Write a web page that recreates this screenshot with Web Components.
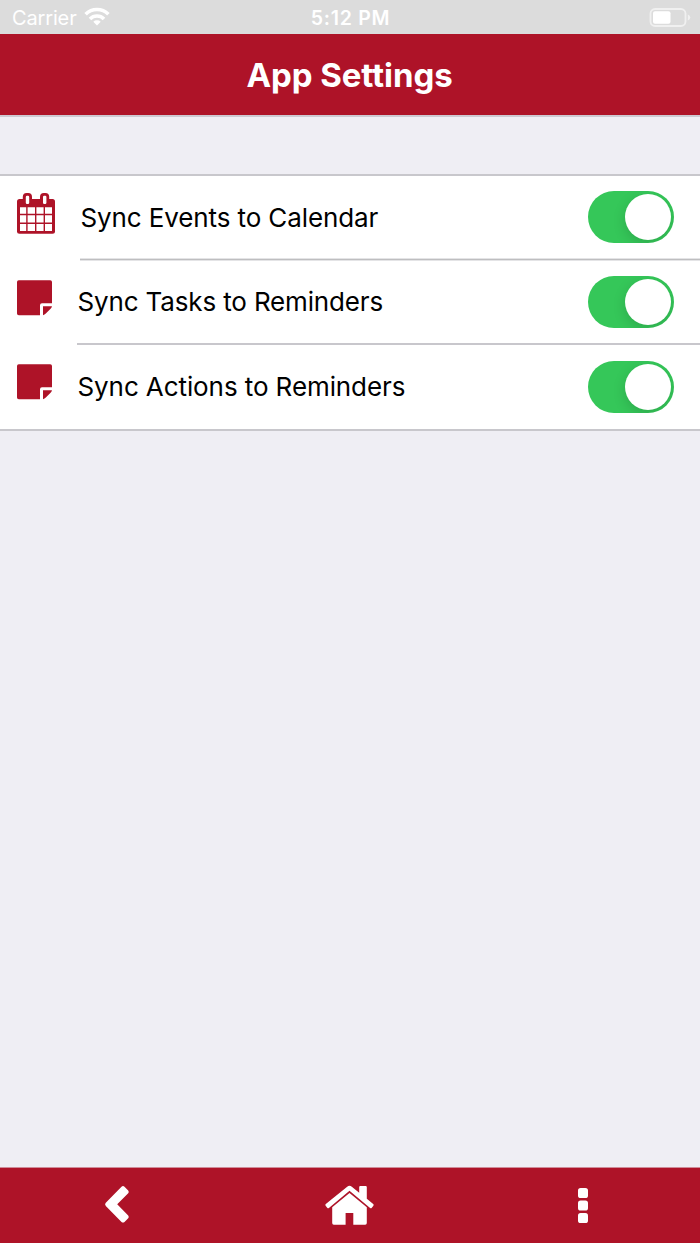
<!DOCTYPE html>
<html lang="en">
<head>
<meta charset="utf-8">
<title>App Settings</title>
<style>
    html, body {
        margin: 0;
        height: 100%;
    }
    body {
        font-family: Inter, "Liberation Sans", sans-serif;
        background: #fff;
        --brand: #ae1328;
        --line: #c8c7cc;
        --page: #efeef4;
    }
</style>
</head>
<body>
<settings-app>
    <status-bar slot="top" carrier="Carrier" time="5:12 PM"></status-bar>
    <title-bar slot="top">App Settings</title-bar>
    <settings-list>
        <settings-row class="first" icon="calendar" style="--inset: 80px; --spacing: -0.11px">Sync Events to Calendar</settings-row>
        <settings-row icon="note" style="--spacing: -0.15px">Sync Tasks to Reminders</settings-row>
        <settings-row class="last" icon="note" style="--spacing: -0.09px">Sync Actions to Reminders</settings-row>
    </settings-list>
    <tool-bar slot="bottom"></tool-bar>
</settings-app>
<script>
function mkTmplt(innerHtml) {
    var tmplt = document.createElement("template");
    tmplt.innerHTML = innerHtml;
    return tmplt;
}
class BaseElement extends HTMLElement {
    constructor() {
        super();
        const shadow = this.attachShadow({ mode: "open" });
        shadow.append(this.constructor._tmplt.content.cloneNode(true));
    }
}

class SettingsApp extends BaseElement {}
SettingsApp._tmplt = mkTmplt(`
        <slot name="top"></slot>
        <main><slot></slot></main>
        <slot name="bottom"></slot>
        <style>
            :host {
                display: flex;
                flex-direction: column;
                height: 1243px;
                background: var(--page);
            }
            main {
                flex: 1;
                padding-top: 57px;
            }
        </style>
    `);

class StatusBar extends BaseElement {
    connectedCallback() {
        this.shadowRoot.querySelector("#carrier").textContent = this.getAttribute("carrier");
        this.shadowRoot.querySelector("#time").textContent = this.getAttribute("time");
    }
}
StatusBar._tmplt = mkTmplt(`
        <div class="left">
            <span id="carrier"></span>
            <svg width="26" height="19" viewBox="0 0 26 19">
                <path d="M13 18.6 L9.3 14.8 A5.4 5.4 0 0 1 16.7 14.8 Z" fill="#fff"/>
                <path d="M6 11.9 A9.9 9.9 0 0 1 20 11.9" fill="none" stroke="#fff" stroke-width="3.6"/>
                <path d="M1.6 7.2 A16.2 16.2 0 0 1 24.4 7.2" fill="none" stroke="#fff" stroke-width="3.6"/>
            </svg>
        </div>
        <span id="time"></span>
        <svg class="battery" width="42" height="20" viewBox="0 0 42 20">
            <rect x="1.5" y="2" width="35" height="17" rx="4.5" fill="none" stroke="#f0f0f0" stroke-width="1.8"/>
            <rect x="4" y="4.3" width="17.5" height="12.4" rx="2" fill="#fff"/>
            <path d="M38.8 7.5 Q41.3 8.5 41.3 10.5 T38.8 13.5 Z" fill="#f0f0f0"/>
        </svg>
        <style>
            :host {
                display: grid;
                grid-template-columns: 1fr auto 1fr;
                align-items: center;
                box-sizing: border-box;
                height: 34px;
                padding: 0 9px 2px 12px;
                background: #dcdcdc;
                color: #fff;
                font-size: 20px;
                line-height: 32px;
            }
            .left {
                display: flex;
                align-items: center;
                gap: 7px;
            }
            .left svg {
                padding-bottom: 2px;
            }
            #carrier {
                letter-spacing: -0.15px;
                padding-top: 2px;
            }
            #time {
                font-weight: 600;
                font-size: 19.5px;
                letter-spacing: 0.75px;
                padding: 2px 2px 0 0;
            }
            .battery {
                justify-self: end;
            }
        </style>
    `);

class TitleBar extends BaseElement {}
TitleBar._tmplt = mkTmplt(`
        <slot></slot>
        <style>
            :host {
                display: flex;
                justify-content: center;
                align-items: center;
                box-sizing: border-box;
                height: 83px;
                padding-right: 1px;
                border-bottom: 2px solid #cdc9d2;
                background: var(--brand);
                color: #fff;
                font-size: 33px;
                font-weight: 700;
                letter-spacing: -0.08px;
            }
        </style>
    `);

class SettingsList extends BaseElement {}
SettingsList._tmplt = mkTmplt(`
        <slot></slot>
        <style>
            :host {
                display: block;
                background: #fff;
                border-top: 2px solid var(--line);
                border-bottom: 2px solid var(--line);
            }
        </style>
    `);

const icons = {
    calendar: `
        <svg width="38" height="41" viewBox="0 0 38 41">
            <rect x="0" y="6" width="38" height="34.8" rx="2.5" fill="#ae1328"/>
            <rect x="5.8" y="0" width="9.2" height="13" rx="3.8" fill="#ae1328"/>
            <rect x="23" y="0" width="9.2" height="13" rx="3.8" fill="#ae1328"/>
            <rect x="8.8" y="2.7" width="3.4" height="8.3" rx="1.2" fill="#fff"/>
            <rect x="26" y="2.7" width="3.4" height="8.3" rx="1.2" fill="#fff"/>
            <path fill="#fff" d="M3 14.3h6.2v6.5H3z M10.6 14.3h7.4v6.5h-7.4z M19.4 14.3h7.2v6.5h-7.2z M28 14.3h7v6.5h-7z
                M3 22.3h6.2v7.1H3z M10.6 22.3h7.4v7.1h-7.4z M19.4 22.3h7.2v7.1h-7.2z M28 22.3h7v7.1h-7z
                M3 30.9h6.2v7.1H3z M10.6 30.9h7.4v7.1h-7.4z M19.4 30.9h7.2v7.1h-7.2z M28 30.9h7v7.1h-7z"/>
        </svg>`,
    note: `
        <svg width="35" height="36" viewBox="0 0 35 36">
            <path fill="#ae1328" d="M1.8 .3H33.2Q35 .3 35 2.1V23.3H25Q23 23.3 23 25.3V35.2H1.8Q0 35.2 0 33.4V2.1Q0 .3 1.8 .3Z"/>
            <path fill="#ae1328" d="M26 26.2H35Q34.8 27.6 33.6 28.8L28.8 33.6Q27.6 34.8 26 35.2Z"/>
        </svg>`
};

class SettingsRow extends BaseElement {
    connectedCallback() {
        this.shadowRoot.querySelector("#icon").innerHTML = icons[this.getAttribute("icon")];
    }
}
SettingsRow._tmplt = mkTmplt(`
        <div id="icon"></div>
        <div class="body">
            <span class="label"><slot></slot></span>
            <toggle-switch></toggle-switch>
        </div>
        <style>
            :host {
                display: flex;
                height: 84px;
                padding-left: 17px;
            }
            :host(.first) {
                height: 85px;
            }
            #icon {
                width: calc(var(--inset, 77px) - 17px);
                padding-top: 19px;
            }
            :host(.first) #icon {
                padding-top: 17px;
            }
            #icon svg {
                display: block;
            }
            .body {
                flex: 1;
                display: flex;
                align-items: center;
                justify-content: space-between;
                box-sizing: border-box;
                padding-right: 26px;
                border-bottom: 2px solid var(--line);
            }
            :host(.first) .body {
                border-bottom: none;
                padding-bottom: 3px;
                background: linear-gradient(#e4e4e6 1px, #bebec0 1px 2px, #e4e4e6 2px) bottom / 100% 3px no-repeat;
            }
            :host(.last) .body {
                border-bottom: none;
            }
            .label {
                font-size: 26px;
                letter-spacing: var(--spacing, 0);
                padding: 0 0 1px 0.5px;
                color: #000;
                white-space: nowrap;
            }
            :host(.first) .label {
                padding-bottom: 0;
            }
        </style>
    `);

class ToggleSwitch extends BaseElement {}
ToggleSwitch._tmplt = mkTmplt(`
        <div class="knob"></div>
        <style>
            :host {
                display: flex;
                justify-content: flex-end;
                align-items: center;
                box-sizing: border-box;
                width: 86px;
                height: 52.5px;
                padding-right: 3px;
                border-radius: 27px;
                background: #35c759;
                overflow: hidden;
            }
            .knob {
                width: 46px;
                height: 46px;
                border-radius: 50%;
                background: #fff;
                box-shadow: 0 4px 13px rgba(0, 0, 0, 0.15);
            }
        </style>
    `);

class ToolBar extends BaseElement {}
ToolBar._tmplt = mkTmplt(`
        <div class="back"><svg width="24" height="37" viewBox="0 0 24 37">
            <path fill="#fff" d="M16.5 .7Q18 -.6 19.5 .7L23.2 4.4Q24.4 5.9 23.2 7.3L12.2 18.3L23.2 29.4Q24.4 30.9 23.2 32.3L19.5 36Q18 37.2 16.5 36L.8 20Q-.7 18.3 .8 16.7Z"/>
        </svg></div>
        <div><svg width="49" height="40" viewBox="0 0.5 49 40">
            <path fill="#fff" d="M22.2 1.2Q24.5 -.7 26.8 1.2L34.2 7.2V1.6Q34.2 .4 35.4 .4H40.6Q41.8 .4 41.8 1.6V13.3L48.2 18.6Q49.1 19.4 48.4 20.3L46.8 22.2Q46 23.1 45.1 22.4L24.5 5.3L3.9 22.4Q3 23.1 2.2 22.2L.6 20.3Q-.1 19.4 .8 18.6Z"/>
            <path fill="#fff" d="M24.5 7.6L41.8 21.8V37.6Q41.8 39.2 40.2 39.2H28.3V27.5H20.6V39.2H8.8Q7.2 39.2 7.2 37.6V21.8Z"/>
        </svg></div>
        <div><svg width="10" height="36" viewBox="0 0.3 10 36">
            <rect width="10" height="10" y=".3" rx="2.6" fill="#fff"/>
            <rect width="10" height="10" y="12.8" rx="2.6" fill="#fff"/>
            <rect width="10" height="10" y="25.4" rx="2.6" fill="#fff"/>
        </svg></div>
        <style>
            :host {
                display: grid;
                grid-template-columns: repeat(3, 1fr);
                box-sizing: border-box;
                height: 76px;
                border-top: 1px solid #cf8c99;
                background: var(--brand);
            }
            div {
                display: flex;
                justify-content: center;
                align-items: center;
            }
            svg {
                overflow: visible;
            }
            .back {
                padding-bottom: 3px;
            }
        </style>
    `);

customElements.define("settings-app", SettingsApp);
customElements.define("status-bar", StatusBar);
customElements.define("title-bar", TitleBar);
customElements.define("settings-list", SettingsList);
customElements.define("toggle-switch", ToggleSwitch);
customElements.define("settings-row", SettingsRow);
customElements.define("tool-bar", ToolBar);
</script>
</body>
</html>
